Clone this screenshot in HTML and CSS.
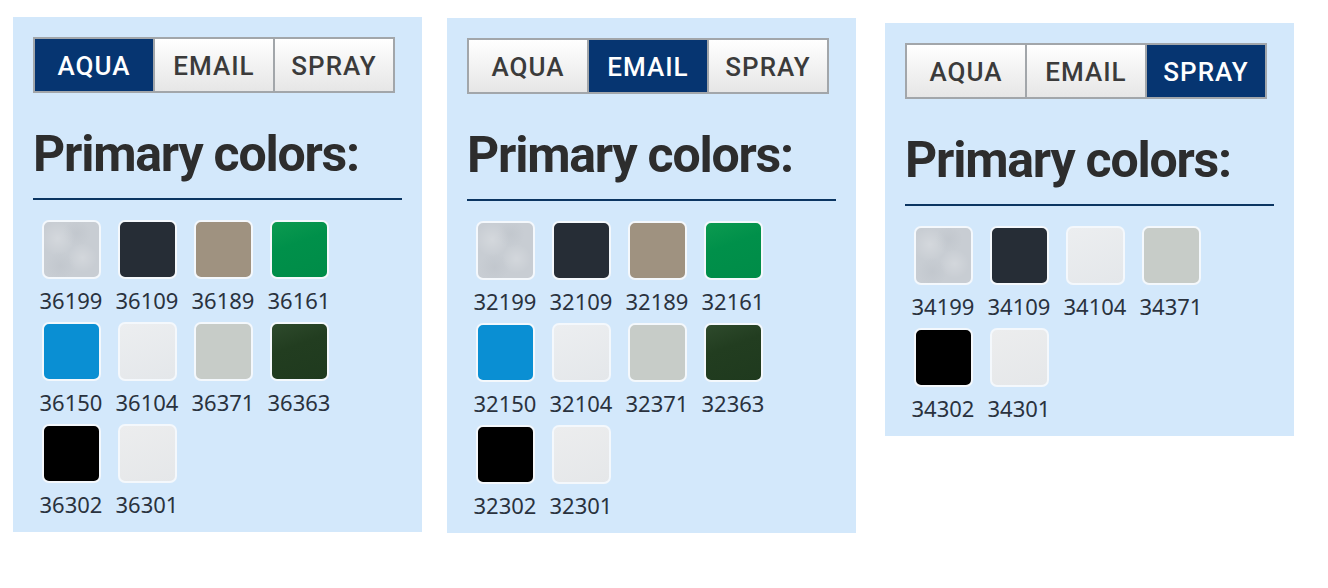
FILE: index.html
```html
<!DOCTYPE html>
<html lang="en">
<head>
<meta charset="utf-8">
<title>Primary colors</title>
<link rel="stylesheet" href="styles.css">
</head>
<body>
<div class="page">
  <section class="panel panel--aqua">
    <nav class="tabs">
      <span class="tab tab--active">AQUA</span>
      <span class="tab">EMAIL</span>
      <span class="tab">SPRAY</span>
    </nav>
    <h2 class="heading">Primary colors:</h2>
    <div class="swatches">
      <div class="item"><span class="swatch sw-marble"></span><span class="code">36199</span></div>
      <div class="item"><span class="swatch sw-anthracite"></span><span class="code">36109</span></div>
      <div class="item"><span class="swatch sw-beige"></span><span class="code">36189</span></div>
      <div class="item"><span class="swatch sw-green"></span><span class="code">36161</span></div>
      <div class="item"><span class="swatch sw-blue"></span><span class="code">36150</span></div>
      <div class="item"><span class="swatch sw-white"></span><span class="code">36104</span></div>
      <div class="item"><span class="swatch sw-grey"></span><span class="code">36371</span></div>
      <div class="item"><span class="swatch sw-darkgreen"></span><span class="code">36363</span></div>
      <div class="item"><span class="swatch sw-black"></span><span class="code">36302</span></div>
      <div class="item"><span class="swatch sw-offwhite"></span><span class="code">36301</span></div>
    </div>
  </section>

  <section class="panel panel--email">
    <nav class="tabs">
      <span class="tab">AQUA</span>
      <span class="tab tab--active">EMAIL</span>
      <span class="tab">SPRAY</span>
    </nav>
    <h2 class="heading">Primary colors:</h2>
    <div class="swatches">
      <div class="item"><span class="swatch sw-marble"></span><span class="code">32199</span></div>
      <div class="item"><span class="swatch sw-anthracite"></span><span class="code">32109</span></div>
      <div class="item"><span class="swatch sw-beige"></span><span class="code">32189</span></div>
      <div class="item"><span class="swatch sw-green"></span><span class="code">32161</span></div>
      <div class="item"><span class="swatch sw-blue"></span><span class="code">32150</span></div>
      <div class="item"><span class="swatch sw-white"></span><span class="code">32104</span></div>
      <div class="item"><span class="swatch sw-grey"></span><span class="code">32371</span></div>
      <div class="item"><span class="swatch sw-darkgreen"></span><span class="code">32363</span></div>
      <div class="item"><span class="swatch sw-black"></span><span class="code">32302</span></div>
      <div class="item"><span class="swatch sw-offwhite"></span><span class="code">32301</span></div>
    </div>
  </section>

  <section class="panel panel--spray">
    <nav class="tabs">
      <span class="tab">AQUA</span>
      <span class="tab">EMAIL</span>
      <span class="tab tab--active">SPRAY</span>
    </nav>
    <h2 class="heading">Primary colors:</h2>
    <div class="swatches">
      <div class="item"><span class="swatch sw-marble"></span><span class="code">34199</span></div>
      <div class="item"><span class="swatch sw-anthracite"></span><span class="code">34109</span></div>
      <div class="item"><span class="swatch sw-white"></span><span class="code">34104</span></div>
      <div class="item"><span class="swatch sw-grey"></span><span class="code">34371</span></div>
      <div class="item"><span class="swatch sw-black"></span><span class="code">34302</span></div>
      <div class="item"><span class="swatch sw-offwhite"></span><span class="code">34301</span></div>
    </div>
  </section>
</div>
</body>
</html>
```

FILE: styles.css
```css
html, body {
  margin: 0;
  padding: 0;
  background: #ffffff;
}

.page {
  display: flex;
  align-items: flex-start;
  gap: 25px;
  padding: 17px 0 0 13px;
}

.panel {
  width: 409px;
  box-sizing: border-box;
  padding: 20px 20px 15px 20px;
  background: #d3e8fb;
}

.panel--email {
  margin-top: 1px;
}

.panel--spray {
  margin-top: 6px;
  margin-left: 4px;
}

.tabs {
  display: flex;
}

.tab {
  width: 122px;
  height: 56px;
  box-sizing: border-box;
  border: 2px solid #a2a6aa;
  margin-left: -2px;
  display: flex;
  align-items: center;
  justify-content: center;
  padding-top: 2px;
  font-family: Roboto, "DejaVu Sans Condensed", sans-serif;
  font-weight: 500;
  font-size: 26px;
  letter-spacing: 1px;
  color: #3b3b3b;
  background: linear-gradient(#ffffff, #e6e6e6);
}

.tab:first-child {
  margin-left: 0;
}

.tab--active {
  background: #063571;
  color: #ffffff;
}

.heading {
  margin: 36px 0 0 0;
  padding: 0 0 19px 0;
  border-bottom: 2px solid #0b3561;
  font-family: Roboto, "DejaVu Sans Condensed", sans-serif;
  font-weight: 700;
  font-size: 50px;
  line-height: 50px;
  letter-spacing: -1.2px;
  white-space: nowrap;
  color: #2d2d2d;
}

.swatches {
  display: grid;
  grid-template-columns: repeat(4, 76px);
  row-gap: 9px;
  margin-top: 20px;
}

.item {
  display: flex;
  flex-direction: column;
  align-items: center;
}

.swatch {
  width: 59px;
  height: 59px;
  box-sizing: border-box;
  border: 2px solid #f4f8fc;
  border-radius: 7px;
}

.code {
  margin-top: 8px;
  font-family: "Noto Sans", sans-serif;
  font-size: 22px;
  line-height: 26px;
  color: #2a323e;
}

.sw-marble {
  background:
    radial-gradient(circle at 25% 30%, rgba(255,255,255,.22), transparent 30%),
    radial-gradient(circle at 70% 65%, rgba(255,255,255,.2), transparent 28%),
    radial-gradient(circle at 60% 20%, rgba(170,176,184,.2), transparent 25%),
    radial-gradient(circle at 30% 80%, rgba(170,176,184,.2), transparent 25%),
    #c8cdd3;
}
.sw-anthracite { background: #262d36; }
.sw-beige { background: #9f9280; }
.sw-green { background: linear-gradient(160deg, #0c9a50, #00904a 40%, #008c48); }
.sw-blue { background: #0a8fd3; }
.sw-white { background: linear-gradient(160deg, #eceef0, #e4e7ea); }
.sw-grey { background: #c7ccc8; }
.sw-darkgreen { background: linear-gradient(160deg, #2e4a2c, #223d20 40%, #1f3a1e); }
.sw-black { background: #000000; }
.sw-offwhite { background: linear-gradient(160deg, #ecedee, #e5e7e9); }
```
